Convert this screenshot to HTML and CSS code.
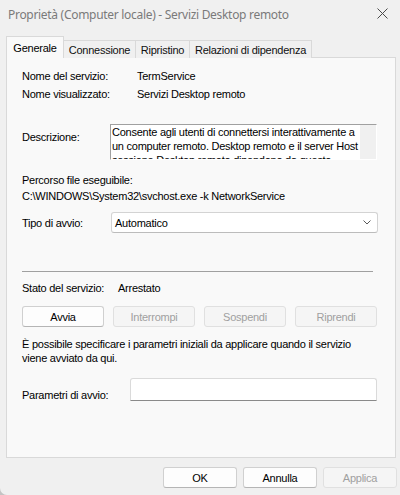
FILE: index.html
```html
<!DOCTYPE html>
<html>
<head>
	<title>Proprietà - Servizi Desktop remoto</title>
	<link rel="stylesheet" href="styles.css">
</head>
<body>
	<div class="window">
		<div class="titlebar">
			<span class="title">Proprietà (Computer locale) - Servizi Desktop remoto</span>
			<svg class="close" width="11" height="11" viewBox="0 0 11 11">
				<path d="M0.5 0.5 L10.5 10.5 M10.5 0.5 L0.5 10.5" stroke="#4a4a4a" stroke-width="1" fill="none"/>
			</svg>
		</div>

		<div class="tabs">
			<div class="tab active t1">Generale</div>
			<div class="tab t2">Connessione</div>
			<div class="tab t3">Ripristino</div>
			<div class="tab t4">Relazioni di dipendenza</div>
		</div>

		<div class="panel">
			<div class="row name">
				<span class="lbl w115">Nome del servizio:</span>
				<span>TermService</span>
			</div>
			<div class="row display">
				<span class="lbl w115">Nome visualizzato:</span>
				<span>Servizi Desktop remoto</span>
			</div>

			<div class="row desc">
				<span class="lbl w88">Descrizione:</span>
				<div class="descbox">
					<div class="desctext">Consente agli utenti di connettersi interattivamente a<br>un computer remoto. Desktop remoto e il server Host<br>sessione Desktop remoto dipendono da questo</div>
					<div class="scroll"></div>
				</div>
			</div>

			<div class="path-label">Percorso file eseguibile:</div>
			<div class="path">C:\WINDOWS\System32\svchost.exe -k NetworkService</div>

			<div class="row startup">
				<span class="lbl w89">Tipo di avvio:</span>
				<div class="combo">
					<span>Automatico</span>
					<svg class="chev" width="8" height="5" viewBox="0 0 8 5">
						<path d="M0.5 0.5 L4 4 L7.5 0.5" stroke="#5a5a5a" stroke-width="1" fill="none"/>
					</svg>
				</div>
			</div>

			<hr class="sep">

			<div class="row state">
				<span class="lbl w96">Stato del servizio:</span>
				<span>Arrestato</span>
			</div>

			<div class="actions">
				<button class="btn">Avvia</button>
				<button class="btn off">Interrompi</button>
				<button class="btn off">Sospendi</button>
				<button class="btn off">Riprendi</button>
			</div>

			<p class="hint">È possibile specificare i parametri iniziali da applicare quando il servizio<br>viene avviato da qui.</p>

			<div class="row params">
				<span class="lbl w108">Parametri di avvio:</span>
				<div class="input"></div>
			</div>
		</div>

		<div class="footer">
			<button class="btn dlg">OK</button>
			<button class="btn dlg">Annulla</button>
			<button class="btn dlg off">Applica</button>
		</div>
	</div>
</body>
</html>
```

FILE: styles.css
```css
html {
	background: #c4c4c4;
}

body {
	margin: 0;
	font-family: "Liberation Sans", Arial, sans-serif;
	font-size: 11px;
	letter-spacing: -0.25px;
	color: #000;
}

.window {
	width: 400px;
	height: 495px;
	background: #f0f0f0;
	border-bottom-left-radius: 7px;
	overflow: hidden;
}

/* title bar */
.titlebar {
	display: flex;
	align-items: center;
	justify-content: space-between;
	height: 29px;
	padding: 0 12px 0 8px;
}

.title {
	font-family: "Noto Sans", sans-serif;
	font-size: 12px;
	letter-spacing: -0.3px;
	color: #7a7a7a;
}

.close {
	display: block;
	margin-top: -2px;
}

/* tabs */
.tabs {
	display: flex;
	align-items: flex-end;
	height: 21px;
	margin-top: 8px;
	padding-left: 6px;
	position: relative;
	z-index: 1;
	margin-bottom: -1px;
}

.tab {
	display: flex;
	align-items: center;
	justify-content: center;
	height: 17px;
	border: 1px solid #d9d9d9;
	border-bottom: none;
	margin-left: -1px;
	background: #f0f0f0;
	color: #111;
	white-space: nowrap;
}

.tab:first-child {
	margin-left: 0;
}

.tab.active {
	height: 21px;
	background: #f9f9f9;
	color: #000;
}

.t1 { width: 56px; }
.t2 { width: 71px; }
.t3 { width: 53px; }
.t4 { width: 121px; }

/* panel */
.panel {
	height: 399px;
	margin: 0 4px 0 6px;
	padding-left: 15px;
	border: 1px solid #d9d9d9;
	background: #f9f9f9;
	line-height: 14px;
}

.row {
	display: flex;
	align-items: center;
}

.lbl {
	flex: none;
}
.w115 { width: 115px; }
.w88 { width: 88px; }
.w89 { width: 89px; }
.w96 { width: 96px; }
.w108 { width: 108px; }

.name { margin-top: 11px; }
.display { margin-top: 4px; }

.desc {
	margin-top: 23px;
	align-items: flex-start;
}

.desc .lbl {
	margin-top: 6px;
}

.descbox {
	display: flex;
	width: 265px;
	height: 34px;
	border: 1px solid #fff;
	border-top-color: #a0a0a0;
	border-left-color: #a0a0a0;
	background: #fff;
	overflow: hidden;
}

.desctext {
	flex: 1;
	padding: 0 1px;
	white-space: nowrap;
	overflow: hidden;
}

.scroll {
	width: 16px;
	background: #f0f0f0;
}

.path-label {
	margin-top: 13px;
}

.path {
	margin-top: 2px;
}

.startup {
	margin-top: 9px;
}

.combo {
	display: flex;
	align-items: center;
	justify-content: space-between;
	width: 256px;
	height: 19px;
	padding: 0 6px 0 3px;
	border: 1px solid #d3d3d3;
	border-bottom-color: #bcbcbc;
	border-radius: 3px;
	background: #fff;
}

.chev {
	display: block;
}

.sep {
	width: 351px;
	height: 0;
	margin: 38px 0 0;
	border: none;
	border-top: 1px solid #a0a0a0;
}

.state {
	margin-top: 9px;
}

.actions {
	display: flex;
	justify-content: space-between;
	width: 355px;
	margin-top: 11px;
}

.btn {
	width: 82px;
	height: 21px;
	padding: 0;
	font: inherit;
	letter-spacing: inherit;
	color: #000;
	background: #fdfdfd;
	border: 1px solid #d0d0d0;
	border-bottom-color: #b5b5b5;
	border-radius: 3px;
}

.btn.off {
	color: #a0a0a0;
	background: #f5f5f5;
	border-color: #e0e0e0;
}

.hint {
	margin: 10px 0 0;
}

.params {
	margin-top: 13px;
	align-items: flex-end;
}

.params .lbl {
	margin-bottom: -1px;
}

.input {
	width: 245px;
	height: 21px;
	border: 1px solid #dadada;
	border-bottom-color: #8a8a8a;
	border-radius: 3px 3px 0 0;
	background: #fff;
}

/* dialog buttons */
.footer {
	display: flex;
	justify-content: flex-end;
	gap: 6px;
	margin-top: 9px;
	padding-right: 3px;
}

.btn.dlg {
	width: 74px;
}
```
